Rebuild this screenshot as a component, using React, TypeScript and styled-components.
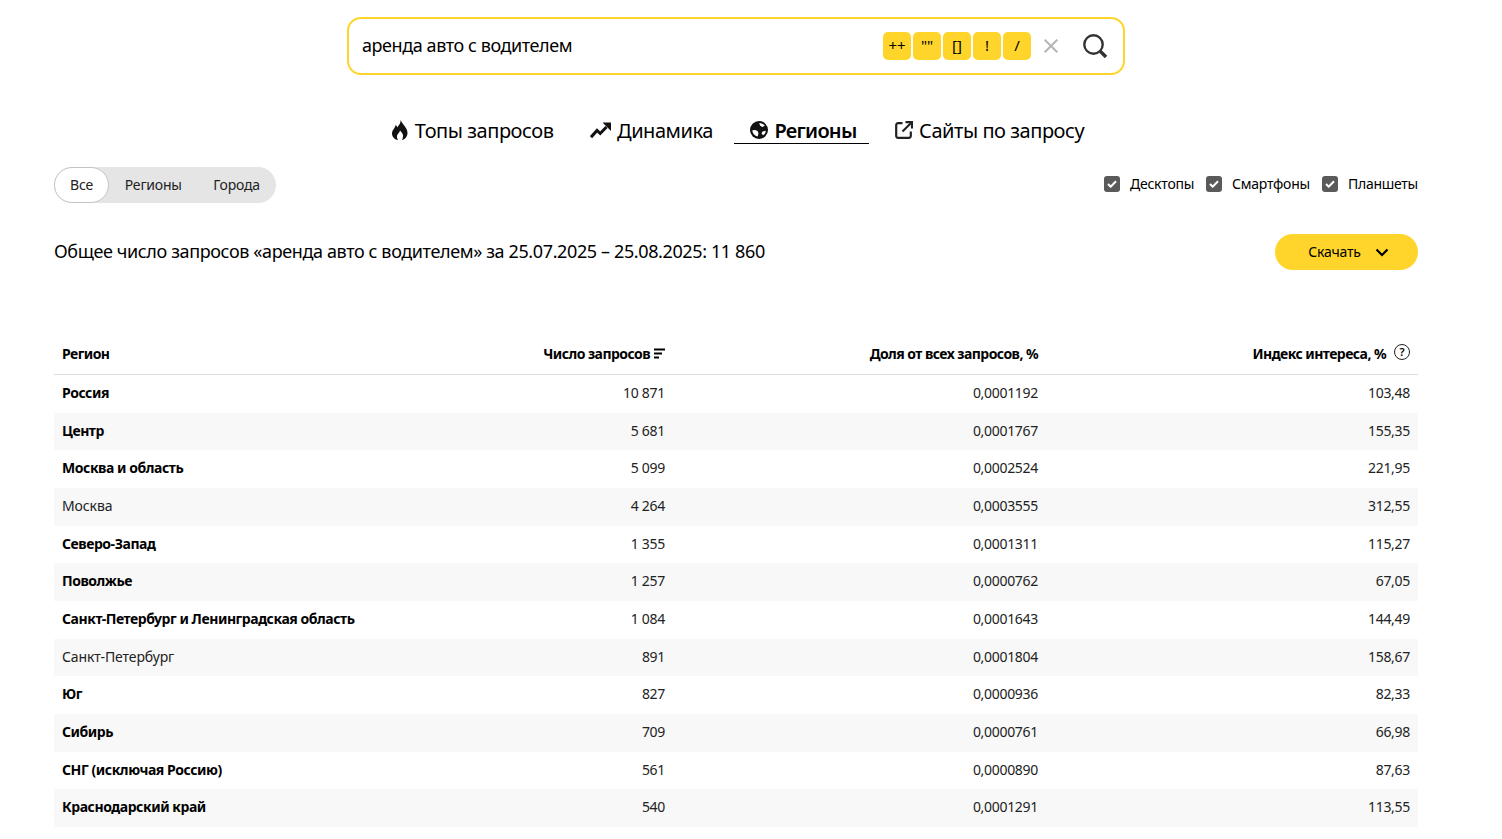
import { createGlobalStyle } from "styled-components"
import styled from "styled-components"

const rows = [
  { name: "Россия", count: "10 871", share: "0,0001192", index: "103,48", bold: true },
  { name: "Центр", count: "5 681", share: "0,0001767", index: "155,35", bold: true },
  { name: "Москва и область", count: "5 099", share: "0,0002524", index: "221,95", bold: true },
  { name: "Москва", count: "4 264", share: "0,0003555", index: "312,55", bold: false },
  { name: "Северо-Запад", count: "1 355", share: "0,0001311", index: "115,27", bold: true },
  { name: "Поволжье", count: "1 257", share: "0,0000762", index: "67,05", bold: true },
  { name: "Санкт-Петербург и Ленинградская область", count: "1 084", share: "0,0001643", index: "144,49", bold: true },
  { name: "Санкт-Петербург", count: "891", share: "0,0001804", index: "158,67", bold: false },
  { name: "Юг", count: "827", share: "0,0000936", index: "82,33", bold: true },
  { name: "Сибирь", count: "709", share: "0,0000761", index: "66,98", bold: true },
  { name: "СНГ (исключая Россию)", count: "561", share: "0,0000890", index: "87,63", bold: true },
  { name: "Краснодарский край", count: "540", share: "0,0001291", index: "113,55", bold: true },
]

const operators = ["++", '""', "[]", "!", "/"]

const FlameIcon = () => (
  <svg width="18" height="20" viewBox="-1 0 18 20">
    <path
      fill="#111"
      fillRule="evenodd"
      d="M8.500 0C9 3.500 6.500 5 5.500 7.500 5 6.500 4.500 5.500 3.500 5 3.500 8 0 10 0 13.500 0 17 3 20 6 20 5 18.500 4.500 16 5.500 14.500 6.500 13 7.500 12.500 8 10.500 9.500 12.500 11 13.500 11 15.500 11 17.500 10.500 19 10 20 13 19.500 15.500 16.500 15.500 13 15.500 8 11 5 8.500 0z"
    />
  </svg>
)

const TrendIcon = () => (
  <svg width="21" height="17" viewBox="0 0 21 17">
    <path d="M1 15.200L7 8.500l3.200 3L16.500 5" fill="none" stroke="#111" strokeWidth="3" />
    <path d="M12.500 0.500H21V9z" fill="#111" />
  </svg>
)

const GlobeIcon = () => (
  <svg width="19" height="18" viewBox="-1 0 19 18">
    <circle cx="9" cy="9" r="9" fill="#111" />
    <path
      d="M9 2.200c2.500-.3 4.600.8 5.800 2.500L12.500 6 10.500 5zM2.200 9.500C4 8.500 6 9 7.500 10l1 2.200-.8 3.300C4.800 15 2.700 12.500 2.200 9.500z"
      fill="#fff"
    />
    <path d="M12.500 10.500l3.300-.8c-.2 2-1.200 3.600-2.800 4.600l-1.500-1.800z" fill="#fff" />
  </svg>
)

const ExternalIcon = () => (
  <svg width="20" height="18" viewBox="-2 0 20 18" fill="none" stroke="#222" strokeWidth="2.200">
    <path d="M7.500 2.200H3a1.800 1.800 0 0 0-1.800 1.800v11A1.800 1.800 0 0 0 3 16.800h11a1.800 1.800 0 0 0 1.800-1.800v-4.500" />
    <path d="M7.500 10.500L16 2" />
    <path d="M10.500 1.100H17v6.500" />
  </svg>
)

const SearchIcon = () => (
  <svg width="24" height="24" viewBox="0 0 24 24" fill="none" stroke="#333">
    <circle cx="10.500" cy="10.500" r="9.200" strokeWidth="2.400" />
    <path d="M17 17l6 6" strokeWidth="3.400" />
  </svg>
)

const CheckIcon = () => (
  <svg width="10" height="8" viewBox="0 0 10 8" fill="none" stroke="#fff" strokeWidth="2">
    <path d="M1 4l2.700 2.700L9 1.200" />
  </svg>
)

const App = () => {
  return (
    <Page>
      <GlobalStyle />
      <SearchBox>
        <SearchText>аренда авто с водителем</SearchText>
        <Operators>
          {operators.map((op) => (
            <Operator key={op}>{op}</Operator>
          ))}
        </Operators>
        <ClearIcon>
          <svg width="14" height="14" viewBox="0 0 14 14" stroke="#b5b5b5" strokeWidth="2">
            <path d="M.7.7l12.600 12.600M13.300.7L.7 13.300" />
          </svg>
        </ClearIcon>
        <SearchIcon />
      </SearchBox>

      <Tabs>
        <Tab>
          <FlameIcon />
          Топы запросов
        </Tab>
        <Tab>
          <TrendIcon />
          Динамика
        </Tab>
        <Tab $active>
          <GlobeIcon />
          Регионы
        </Tab>
        <Tab>
          <ExternalIcon />
          Сайты по запросу
        </Tab>
      </Tabs>

      <Filters>
        <Segments>
          <Segment $active>Все</Segment>
          <Segment>Регионы</Segment>
          <Segment>Города</Segment>
        </Segments>
        <Devices>
          {["Десктопы", "Смартфоны", "Планшеты"].map((d) => (
            <Device key={d}>
              <Check>
                <CheckIcon />
              </Check>
              {d}
            </Device>
          ))}
        </Devices>
      </Filters>

      <Summary>
        <SummaryText>
          Общее число запросов «аренда авто с водителем» за 25.07.2025 – 25.08.2025: 11 860
        </SummaryText>
        <Download>
          <DownloadLabel>Скачать</DownloadLabel>
          <svg width="14" height="9" viewBox="0 0 14 9" fill="none" stroke="#000" strokeWidth="2.200">
            <path d="M1.500 1.500L7 7l5.500-5.500" />
          </svg>
        </Download>
      </Summary>

      <Table>
        <HeadRow>
          <HeadCell>Регион</HeadCell>
          <HeadCell $right>
            Число запросов
            <svg width="11" height="11" viewBox="0 0 11 11" stroke="#000" strokeWidth="1.800">
              <path d="M0 1.500h11M0 5.500h8M0 9.500h5" />
            </svg>
          </HeadCell>
          <HeadCell $right>Доля от всех запросов, %</HeadCell>
          <HeadCell $right>
            Индекс интереса, %
            <HelpMark>?</HelpMark>
          </HeadCell>
        </HeadRow>
        {rows.map((row) => (
          <Row key={row.name}>
            <RegionCell $bold={row.bold}>{row.name}</RegionCell>
            <Cell>{row.count}</Cell>
            <Cell>{row.share}</Cell>
            <Cell>{row.index}</Cell>
          </Row>
        ))}
      </Table>
    </Page>
  )
}

export default App

const GlobalStyle = createGlobalStyle`
  body {
    margin: 0;
    background: #fff;
    color: #000;
    font-family: "Noto Sans", "Liberation Sans", sans-serif;
  }
`

const Page = styled.div`
  width: 1364px;
  margin-left: 54px;
  display: flex;
  flex-direction: column;
`

const SearchBox = styled.div`
  box-sizing: border-box;
  width: 778px;
  height: 58px;
  margin: 17px 0 0 293px;
  padding: 0 16px 0 13px;
  display: flex;
  align-items: center;
  border: 2px solid #ffd52b;
  border-radius: 14px;
`

const SearchText = styled.div`
  flex: 1;
  font-size: 18px;
  letter-spacing: -0.42px;
  margin-bottom: 2px;
`

const Operators = styled.div`
  display: flex;
  gap: 2px;
`

const Operator = styled.div`
  box-sizing: border-box;
  width: 28px;
  height: 28px;
  padding-bottom: 2px;
  border-radius: 5px;
  background: #ffd52b;
  display: flex;
  align-items: center;
  justify-content: center;
  font-size: 15px;
  line-height: 1;
`

const ClearIcon = styled.div`
  display: flex;
  margin: 0 25px 0 13px;
`

const Tabs = styled.div`
  margin-top: 41px;
  display: flex;
  justify-content: center;
  gap: 9.500px;
`

const Tab = styled.div<{ $active?: boolean }>`
  height: 26px;
  padding: 1px 12px 0 15px;
  display: flex;
  align-items: center;
  gap: 6px;
  font-size: 20px;
  letter-spacing: ${(p) => (p.$active ? "-0.73px" : "-0.45px")};
  font-weight: ${(p) => (p.$active ? 600 : 400)};
  border-bottom: 1px solid ${(p) => (p.$active ? "#000" : "transparent")};
`

const Filters = styled.div`
  margin-top: 23px;
  display: flex;
  justify-content: space-between;
  align-items: center;
`

const Segments = styled.div`
  display: flex;
  width: 222px;
  height: 36px;
  border-radius: 18px;
  background: #e5e5e5;
`

const Segment = styled.div<{ $active?: boolean }>`
  box-sizing: border-box;
  height: 36px;
  padding: 0 ${(p) => (p.$active ? "15px" : "15.750px")} 2px;
  display: flex;
  align-items: center;
  font-size: 14px;
  letter-spacing: -0.2px;
  color: #222;
  border-radius: 18px;
  background: ${(p) => (p.$active ? "#fff" : "transparent")};
  border: ${(p) => (p.$active ? "1px solid #c4c4c4" : "none")};
`

const Devices = styled.div`
  display: flex;
  gap: 12px;
  margin-bottom: 3px;
`

const Device = styled.div`
  display: flex;
  align-items: center;
  gap: 10px;
  font-size: 14px;
  letter-spacing: -0.25px;
`

const Check = styled.div`
  width: 16px;
  height: 16px;
  border-radius: 3px;
  background: #5a5a5a;
  display: flex;
  align-items: center;
  justify-content: center;
`

const Summary = styled.div`
  margin-top: 31px;
  display: flex;
  justify-content: space-between;
  align-items: center;
`

const SummaryText = styled.div`
  font-size: 18px;
  letter-spacing: -0.38px;
  margin-bottom: 3px;
`

const Download = styled.div`
  box-sizing: border-box;
  width: 143px;
  height: 36px;
  padding-left: 4px;
  border-radius: 18px;
  background: #ffd52b;
  display: flex;
  align-items: center;
  justify-content: center;
  gap: 14px;
`

const DownloadLabel = styled.span`
  font-size: 14px;
  letter-spacing: -0.2px;
  margin-bottom: 2px;
`

const Table = styled.div`
  margin-top: 66px;
  display: flex;
  flex-direction: column;
`

const HeadRow = styled.div`
  box-sizing: border-box;
  height: 39px;
  padding-bottom: 4px;
  display: grid;
  grid-template-columns: 246px 373px 373px 372px;
  align-items: center;
  border-bottom: 1px solid #dedede;
`

const HeadCell = styled.div<{ $right?: boolean }>`
  padding: 0 8px;
  display: flex;
  align-items: center;
  gap: 4px;
  justify-content: ${(p) => (p.$right ? "flex-end" : "flex-start")};
  font-size: 14px;
  font-weight: 700;
  letter-spacing: -0.55px;
`

const HelpMark = styled.span`
  box-sizing: border-box;
  width: 16px;
  height: 16px;
  margin: -3px 0 0 4px;
  border: 1.500px solid #222;
  border-radius: 50%;
  display: flex;
  align-items: center;
  justify-content: center;
  font-size: 11px;
  font-weight: 600;
  letter-spacing: 0;
`

const Row = styled.div`
  box-sizing: border-box;
  height: 37.670px;
  padding-bottom: 2.500px;
  display: grid;
  grid-template-columns: 246px 373px 373px 372px;
  align-items: center;

  &:nth-child(odd) {
    background: #f8f8f8;
  }
`

const Cell = styled.div`
  padding: 0 8px;
  text-align: right;
  font-size: 14px;
  letter-spacing: -0.3px;
  color: #222;
`

const RegionCell = styled.div<{ $bold: boolean }>`
  padding: 0 8px;
  white-space: nowrap;
  font-size: 14px;
  letter-spacing: ${(p) => (p.$bold ? "-0.45px" : "-0.1px")};
  font-weight: ${(p) => (p.$bold ? 700 : 400)};
  color: ${(p) => (p.$bold ? "#000" : "#222")};
`
